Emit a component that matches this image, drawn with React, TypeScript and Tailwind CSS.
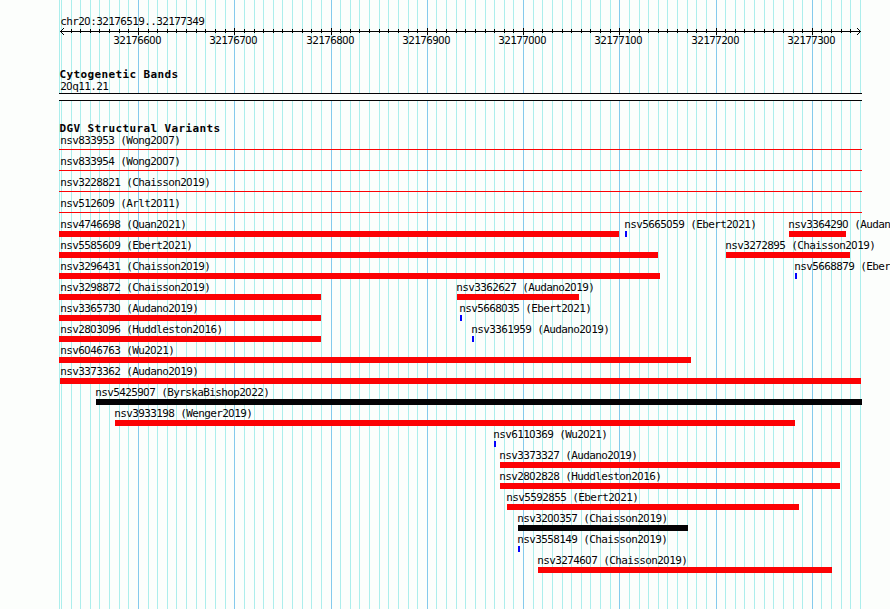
import { clsx } from "clsx";

const REGION_START = 32176519;
const REGION_END = 32177349;
const PAD_LEFT = 60;
const PLOT_WIDTH = 800;

const toX = (pos: number) =>
  Math.round(PAD_LEFT + ((pos - REGION_START) * PLOT_WIDTH) / (REGION_END - REGION_START + 1));

const positions = Array.from({ length: 84 }, (_, i) => 32176520 + i * 10);
const majors = positions.filter((pos) => pos % 100 === 0);

type Feature = {
  name: string;
  from: number;
  to: number;
  kind?: "loss" | "gain" | "complex" | "line";
};

const rows: Feature[][] = [
  [{ name: "nsv833953 (Wong2007)", from: 59, to: 862, kind: "line" }],
  [{ name: "nsv833954 (Wong2007)", from: 59, to: 862, kind: "line" }],
  [{ name: "nsv3228821 (Chaisson2019)", from: 59, to: 862, kind: "line" }],
  [{ name: "nsv512609 (Arlt2011)", from: 59, to: 862, kind: "line" }],
  [
    { name: "nsv4746698 (Quan2021)", from: 59, to: 619 },
    { name: "nsv5665059 (Ebert2021)", from: 625, to: 627, kind: "gain" },
    { name: "nsv3364290 (Audano2019)", from: 789, to: 846 },
  ],
  [
    { name: "nsv5585609 (Ebert2021)", from: 59, to: 658 },
    { name: "nsv3272895 (Chaisson2019)", from: 726, to: 850 },
  ],
  [
    { name: "nsv3296431 (Chaisson2019)", from: 59, to: 660 },
    { name: "nsv5668879 (Ebert2021)", from: 795, to: 797, kind: "gain" },
  ],
  [
    { name: "nsv3298872 (Chaisson2019)", from: 59, to: 321 },
    { name: "nsv3362627 (Audano2019)", from: 457, to: 579 },
  ],
  [
    { name: "nsv3365730 (Audano2019)", from: 59, to: 321 },
    { name: "nsv5668035 (Ebert2021)", from: 460, to: 462, kind: "gain" },
  ],
  [
    { name: "nsv2803096 (Huddleston2016)", from: 59, to: 321 },
    { name: "nsv3361959 (Audano2019)", from: 472, to: 474, kind: "gain" },
  ],
  [{ name: "nsv6046763 (Wu2021)", from: 59, to: 691 }],
  [{ name: "nsv3373362 (Audano2019)", from: 60, to: 861 }],
  [{ name: "nsv5425907 (ByrskaBishop2022)", from: 96, to: 862, kind: "complex" }],
  [{ name: "nsv3933198 (Wenger2019)", from: 115, to: 795 }],
  [{ name: "nsv6110369 (Wu2021)", from: 494, to: 496, kind: "gain" }],
  [{ name: "nsv3373327 (Audano2019)", from: 500, to: 840 }],
  [{ name: "nsv2802828 (Huddleston2016)", from: 500, to: 840 }],
  [{ name: "nsv5592855 (Ebert2021)", from: 507, to: 799 }],
  [{ name: "nsv3200357 (Chaisson2019)", from: 518, to: 688, kind: "complex" }],
  [{ name: "nsv3558149 (Chaisson2019)", from: 518, to: 520, kind: "gain" }],
  [{ name: "nsv3274607 (Chaisson2019)", from: 538, to: 832 }],
];

// Monospaced label on a 6px cell; zeros are set without the dot
function Label({ children }: { children: string }) {
  return (
    <span className="block h-3 whitespace-pre pl-[0.3px] font-['DejaVu_Sans_Mono',monospace] text-[11px] leading-[14px] tracking-[-0.622px]">
      {children.split(/(0)/).map((part, i) =>
        part === "0" ? (
          <span key={i} className="font-[Roboto,sans-serif] leading-[0] tracking-[-0.178px]">
            0
          </span>
        ) : (
          part
        )
      )}
    </span>
  );
}

function TrackTitle({ children }: { children: string }) {
  return (
    <h2 className="h-3 whitespace-pre pl-[59.5px] font-['DejaVu_Sans_Mono',monospace] text-[11px] font-bold leading-[14px] tracking-[0.378px]">
      {children}
    </h2>
  );
}

function GridLines() {
  return (
    <svg className="absolute inset-0" width="890" height="609" shapeRendering="crispEdges">
      <rect x={59} y={0} width={1} height={609} fill="#aceeec" />
      {positions.map((pos) => (
        <rect
          key={pos}
          x={toX(pos)}
          y={0}
          width={1}
          height={609}
          fill={pos % 100 === 0 ? "#84caec" : "#aceeec"}
        />
      ))}
    </svg>
  );
}

function Ruler() {
  return (
    <div className="relative h-[22px]">
      <svg className="block" width="890" height="8" shapeRendering="crispEdges">
        <rect x={60} y={4} width={801} height={1} />
        {positions.slice(1, -1).map((pos) => {
          const major = pos % 100 === 0;
          return (
            <rect key={pos} x={toX(pos)} y={major ? 1 : 2} width={1} height={major ? 7 : 4} />
          );
        })}
        {[1, 2, 3].map((d) => (
          <g key={d}>
            <rect x={60 + d} y={4 - d} width={1} height={1} />
            <rect x={60 + d} y={4 + d} width={1} height={1} />
            <rect x={860 - d} y={4 - d} width={1} height={1} />
            <rect x={860 - d} y={4 + d} width={1} height={1} />
          </g>
        ))}
      </svg>
      {majors.map((pos) => (
        <div key={pos} className="absolute top-[7px]" style={{ left: toX(pos) - 25 }}>
          <Label>{String(pos)}</Label>
        </div>
      ))}
    </div>
  );
}

function Variant({ feature }: { feature: Feature }) {
  const { name, from, to, kind = "loss" } = feature;
  return (
    <>
      <div className="absolute top-0" style={{ left: Math.max(60, from - 1) }}>
        <Label>{name}</Label>
      </div>
      <div
        className={clsx(
          "absolute",
          kind === "line" ? "top-[15px] h-px" : "top-[13px] h-[6px]",
          kind === "gain" && "bg-[#0402fc]",
          kind === "complex" && "bg-[#040204]",
          (kind === "loss" || kind === "line") && "bg-[#fc0204]"
        )}
        style={{ left: from, width: to - from }}
      />
    </>
  );
}

export default function App() {
  return (
    <main className="relative h-[609px] w-[890px] overflow-hidden bg-[#fcfefc] text-[#040204]">
      <GridLines />
      <div className="relative pt-[15px]">
        <div className="pl-[60px]">
          <Label>{`chr20:${REGION_START}..${REGION_END}`}</Label>
        </div>
        <Ruler />

        <section className="mt-[19px]">
          <TrackTitle>Cytogenetic Bands</TrackTitle>
          <div className="pl-[60px]">
            <Label>20q11.21</Label>
          </div>
          <div className="ml-[59px] mt-px h-2 w-[803px] border-y border-[#040204] bg-[#fcfefc]" />
        </section>

        <section className="mt-[21px]">
          <TrackTitle>DGV Structural Variants</TrackTitle>
          {rows.map((row) => (
            <div key={row[0].name} className="relative h-[21px]">
              {row.map((feature) => (
                <Variant key={feature.name} feature={feature} />
              ))}
            </div>
          ))}
        </section>
      </div>
    </main>
  );
}
